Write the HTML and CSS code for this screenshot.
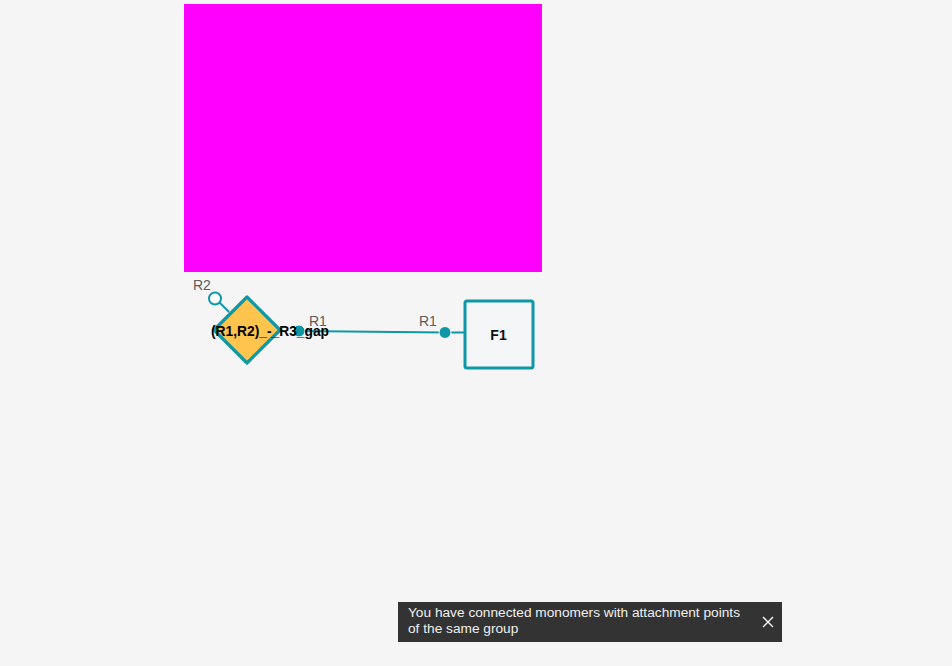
FILE: index.html
```html
<!DOCTYPE html>
<html>
<head>
<meta charset="utf-8">
<link rel="stylesheet" href="styles.css">
</head>
<body>
<div class="page">
  <div class="preview"></div>
  <svg class="canvas" width="952" height="666" viewBox="0 0 952 666">
    <line class="bond" x1="299" y1="331" x2="445" y2="332.5"/>
    <line class="bond" x1="445" y1="332.5" x2="466" y2="332.5"/>
    <line class="bond" x1="215" y1="298" x2="229" y2="312"/>
    <polygon class="peptide" points="247,297 280,330 247,363 214,330"/>
    <circle class="ap-open" cx="215" cy="298.5" r="6"/>
    <circle class="ap-fill" cx="299" cy="331" r="6"/>
    <text class="ap-label" x="193" y="290">R2</text>
    <text class="ap-label" x="309" y="326">R1</text>
    <text class="name" x="270" y="336" text-anchor="middle">(R1,R2)_-_R3_gap</text>
    <rect class="chem" x="465" y="301" width="68" height="67" rx="2"/>
    <circle class="ap-fill" cx="445" cy="332.5" r="6"/>
    <text class="ap-label" x="419" y="326">R1</text>
    <text class="fname" x="498.5" y="340" text-anchor="middle">F1</text>
  </svg>
  <div class="toast">
    <span class="toast-text">You have connected monomers with attachment points of the same group</span>
    <svg class="toast-close" width="12" height="12" viewBox="0 0 12 12"><path d="M1 1L11 11M11 1L1 11" stroke="#fff" stroke-width="1.4"/></svg>
  </div>
</div>
</body>
</html>
```
FILE: styles.css
```css
html, body {
  margin: 0;
  padding: 0;
  background: #f5f5f5;
  width: 952px;
  height: 666px;
  overflow: hidden;
}
.page {
  position: relative;
  width: 952px;
  height: 666px;
  box-sizing: border-box;
  padding-top: 4px;
  font-family: "Liberation Sans", Arial, sans-serif;
}
.preview {
  margin-left: 184px;
  width: 358px;
  height: 268px;
  background: #ff00ff;
}
.canvas {
  position: absolute;
  left: 0;
  top: 0;
}
.bond {
  stroke: #0e97a5;
  stroke-width: 2;
}
.peptide {
  fill: #ffc44d;
  stroke: #0e97a5;
  stroke-width: 3.2;
  stroke-linejoin: round;
}
.ap-open {
  fill: #ffffff;
  stroke: #0e97a5;
  stroke-width: 2;
}
.ap-fill {
  fill: #0e97a5;
  stroke: #ffffff;
  stroke-width: 1;
}
.ap-label {
  font-family: "Liberation Sans", Arial, sans-serif;
  font-size: 14px;
  fill: #5c5c5c;
}
.name {
  font-family: "Liberation Sans", Arial, sans-serif;
  font-size: 13.8px;
  font-weight: bold;
  fill: #000;
}
.chem {
  fill: #f5f6f8;
  stroke: #0e97a5;
  stroke-width: 3;
}
.fname {
  font-family: "Liberation Sans", Arial, sans-serif;
  font-size: 14px;
  font-weight: bold;
  fill: #111;
}
.toast {
  position: absolute;
  left: 398px;
  top: 602px;
  width: 384px;
  height: 40px;
  box-sizing: border-box;
  padding: 3px 8px 0 10px;
  background: #333333;
  display: flex;
  align-items: flex-start;
  justify-content: space-between;
}
.toast-text {
  color: #f0f0f0;
  font-family: "Liberation Sans", Arial, sans-serif;
  font-size: 13.7px;
  line-height: 16px;
  width: 340px;
}
.toast-close {
  margin-top: 11px;
}
```
